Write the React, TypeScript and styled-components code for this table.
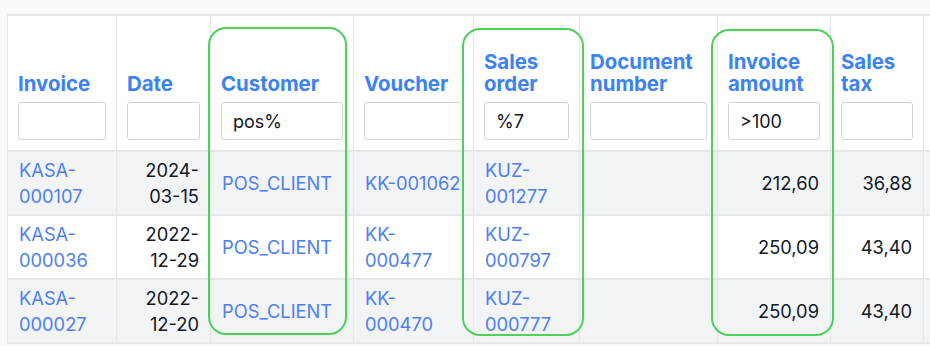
import styled, { createGlobalStyle } from "styled-components";

const GlobalStyle = createGlobalStyle`
  body {
    margin: 0;
    background: #f8f9fb;
    font-family: Inter, "Noto Sans", sans-serif;
  }
`;

interface Column {
  key: string;
  title: string[];
  width: number;
  filter?: string;
  align?: "left" | "right";
  link?: boolean;
}

interface Row {
  [key: string]: string;
}

const columns: Column[] = [
  { key: "invoice", title: ["Invoice"], width: 109, link: true },
  { key: "date", title: ["Date"], width: 94, align: "right" },
  { key: "customer", title: ["Customer"], width: 143, filter: "pos%", link: true },
  { key: "voucher", title: ["Voucher"], width: 120, link: true },
  { key: "salesOrder", title: ["Sales", "order"], width: 106, filter: "%7", link: true },
  { key: "document", title: ["Document", "number"], width: 138 },
  { key: "amount", title: ["Invoice", "amount"], width: 113, filter: ">100", align: "right" },
  { key: "tax", title: ["Sales", "tax"], width: 93, align: "right" },
  { key: "extra", title: [""], width: 100 },
];

const rows: Row[] = [
  {
    invoice: "KASA-000107",
    date: "2024-03-15",
    customer: "POS_CLIENT",
    voucher: "KK-001062",
    salesOrder: "KUZ-001277",
    document: "",
    amount: "212,60",
    tax: "36,88",
    extra: "",
  },
  {
    invoice: "KASA-000036",
    date: "2022-12-29",
    customer: "POS_CLIENT",
    voucher: "KK-000477",
    salesOrder: "KUZ-000797",
    document: "",
    amount: "250,09",
    tax: "43,40",
    extra: "",
  },
  {
    invoice: "KASA-000027",
    date: "2022-12-20",
    customer: "POS_CLIENT",
    voucher: "KK-000470",
    salesOrder: "KUZ-000777",
    document: "",
    amount: "250,09",
    tax: "43,40",
    extra: "",
  },
];

// 注釈の緑枠（テーブルの上に重ねる）
const highlights = [
  { left: 201, top: 13, width: 139, height: 308 },
  { left: 455, top: 14, width: 122, height: 308 },
  { left: 704, top: 15, width: 123, height: 307 },
];

const Page = styled.div`
  padding: 14px 0 0 7px;
  overflow: hidden;
  width: 923px;
`;

const TableFrame = styled.div`
  position: relative;
  width: 1100px;
`;

const Table = styled.table`
  border-collapse: collapse;
  table-layout: fixed;
  border-top: 2px solid #e5e7eb;
  border-left: 1px solid #e5e7eb;
  color: #111827;
`;

const HeadCell = styled.th<{ $width: number }>`
  width: ${({ $width }) => $width}px;
  height: 136px;
  box-sizing: border-box;
  padding: 10px 10px 10px 10px;
  vertical-align: bottom;
  text-align: left;
  background: #ffffff;
  border-right: 1px solid #e5e7eb;
  border-bottom: 2px solid #e5e7eb;
`;

const HeadTitle = styled.div`
  font-size: 20.4px;
  font-weight: 700;
  line-height: 22px;
  color: #3b82f6;
  margin-bottom: 7px;
`;

const FilterInput = styled.input`
  display: block;
  box-sizing: border-box;
  width: 100%;
  height: 38px;
  padding: 0 11px;
  border: 1px solid #d1d5db;
  border-radius: 3px;
  background: #ffffff;
  font-family: inherit;
  font-size: 18px;
  color: #111827;
  outline: none;
`;

const BodyRow = styled.tr<{ $striped: boolean }>`
  background: ${({ $striped }) => ($striped ? "#f3f4f6" : "#ffffff")};
  border-bottom: 2px solid #e5e7eb;
`;

const Cell = styled.td<{ $align: "left" | "right"; $link: boolean }>`
  height: 60px;
  box-sizing: border-box;
  padding: 5px 11px;
  vertical-align: middle;
  text-align: ${({ $align }) => $align};
  line-height: 26px;
  font-size: 18.3px;
  color: ${({ $link }) => ($link ? "#4d7ef3" : "#111827")};
  border-right: 1px solid #e5e7eb;
`;

const Highlight = styled.div`
  position: absolute;
  box-sizing: border-box;
  border: 2px solid #4fcf5c;
  border-radius: 18px;
  pointer-events: none;
`;

export default function App() {
  return (
    <>
      <GlobalStyle />
      <Page>
        <TableFrame>
          <Table>
            <thead>
              <tr>
                {columns.map((col) => (
                  <HeadCell key={col.key} $width={col.width}>
                    {col.key !== "extra" && (
                      <>
                        <HeadTitle>
                          {col.title.map((line, i) => (
                            <div key={i}>{line}</div>
                          ))}
                        </HeadTitle>
                        <FilterInput defaultValue={col.filter ?? ""} />
                      </>
                    )}
                  </HeadCell>
                ))}
              </tr>
            </thead>
            <tbody>
              {rows.map((row, i) => (
                <BodyRow key={i} $striped={i % 2 === 0}>
                  {columns.map((col) => (
                    <Cell key={col.key} $align={col.align ?? "left"} $link={!!col.link}>
                      {row[col.key]}
                    </Cell>
                  ))}
                </BodyRow>
              ))}
            </tbody>
          </Table>
          {highlights.map((h, i) => (
            <Highlight key={i} style={{ left: h.left, top: h.top, width: h.width, height: h.height }} />
          ))}
        </TableFrame>
      </Page>
    </>
  );
}
